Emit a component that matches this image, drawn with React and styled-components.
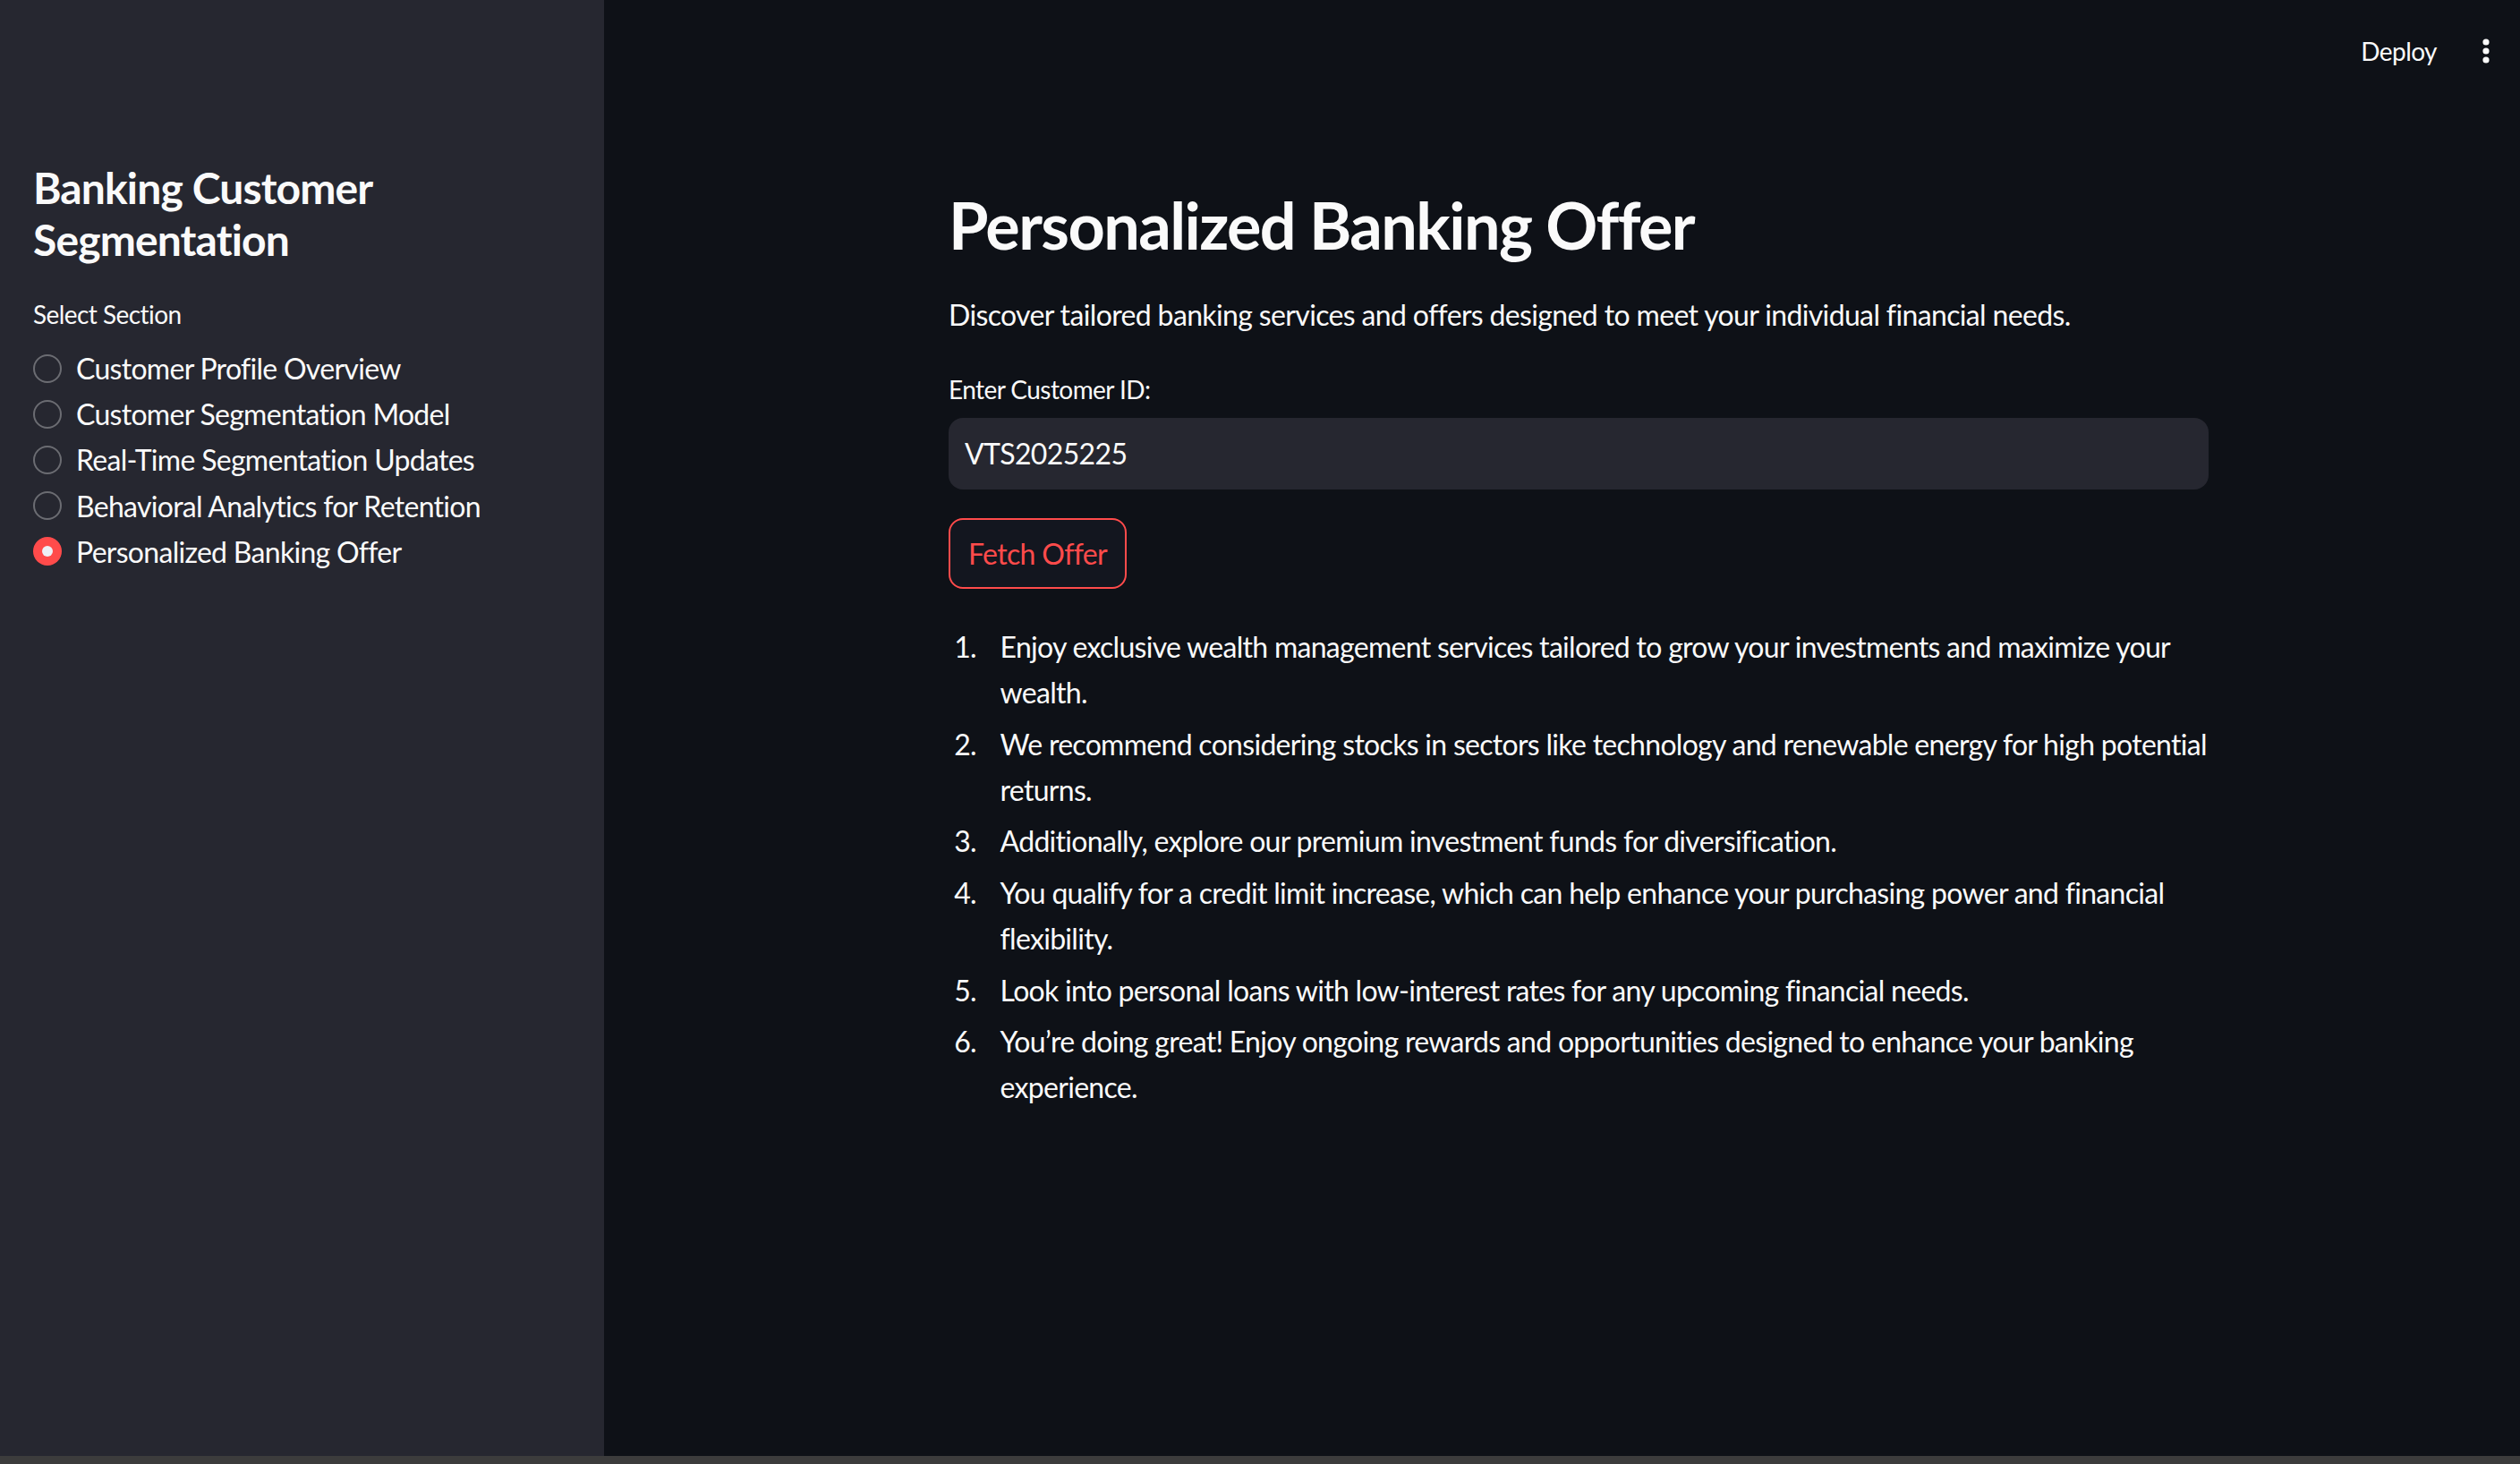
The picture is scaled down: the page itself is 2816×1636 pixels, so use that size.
import { useState } from 'react';
import styled, { createGlobalStyle } from 'styled-components';

const GlobalStyle = createGlobalStyle`
  html, body {
    margin: 0;
    padding: 0;
    background: #0e1117;
  }
  body {
    font-family: "Lato", "Noto Sans", sans-serif;
    color: #fafafa;
  }
  * {
    box-sizing: border-box;
  }
`;

const Shell = styled.div`
  height: 100vh;
  display: flex;
  flex-direction: column;
  overflow: hidden;
`;

const Body = styled.div`
  flex: 1;
  display: flex;
  min-height: 0;
`;

const BottomBar = styled.div`
  height: 9px;
  flex-shrink: 0;
  background: #3c3c3c;
`;

const Sidebar = styled.aside`
  width: 675px;
  flex-shrink: 0;
  background: #262730;
  padding: 181px 36px 0 37px;
`;

const SideTitle = styled.h1`
  margin: 0;
  font-size: 48px;
  font-weight: 700;
  line-height: 1.2;
  letter-spacing: -0.018em;
`;

const SmallLabel = styled.div`
  font-size: 28px;
  line-height: 1.6;
  letter-spacing: -0.02em;
  margin-top: ${(p) => p.$top || 0}px;
`;

const RadioGroup = styled.div`
  display: flex;
  flex-direction: column;
  margin-top: 12px;
`;

const RadioRow = styled.label`
  display: flex;
  align-items: center;
  gap: 16px;
  height: 51.2px;
  font-size: 32px;
  line-height: 1.6;
  letter-spacing: -0.022em;
  cursor: pointer;
`;

const Circle = styled.span`
  width: 32px;
  height: 32px;
  border-radius: 50%;
  flex-shrink: 0;
  display: flex;
  align-items: center;
  justify-content: center;
  border: ${(p) => (p.$checked ? 'none' : '2px solid #6b6c72')};
  background: ${(p) => (p.$checked ? '#ff4b4b' : 'transparent')};

  &::after {
    content: '';
    display: ${(p) => (p.$checked ? 'block' : 'none')};
    width: 12px;
    height: 12px;
    border-radius: 50%;
    background: #eef0f6;
  }
`;

const Main = styled.main`
  flex: 1;
  display: flex;
  flex-direction: column;
`;

const Header = styled.header`
  height: 114px;
  display: flex;
  align-items: center;
  justify-content: flex-end;
  gap: 39px;
  padding-right: 22px;
`;

const DeployButton = styled.button`
  background: none;
  border: none;
  color: #fafafa;
  font-family: inherit;
  letter-spacing: -0.02em;
  font-size: 28px;
  padding: 0;
  cursor: pointer;
`;

const MenuButton = styled.button`
  background: none;
  border: none;
  padding: 0;
  width: 32px;
  height: 32px;
  display: flex;
  cursor: pointer;
`;

const Content = styled.div`
  width: 1408px;
  margin-left: 385px;
  padding-top: 94px;
  display: flex;
  flex-direction: column;
  align-items: flex-start;
`;

const Heading = styled.h2`
  margin: 0;
  font-size: 72px;
  font-weight: 700;
  line-height: 1.2;
  letter-spacing: -0.022em;
`;

const Paragraph = styled.p`
  margin: 31.6px 0 0;
  font-size: 32px;
  line-height: 1.6;
  letter-spacing: -0.02em;
`;

const TextInput = styled.input`
  margin-top: 9px;
  width: 100%;
  height: 80px;
  background: #262730;
  border: none;
  outline: none;
  border-radius: 16px;
  padding: 0 18px;
  color: #fafafa;
  font-family: inherit;
  letter-spacing: -0.02em;
  font-size: 32px;
`;

const FetchButton = styled.button`
  margin-top: 32px;
  height: 79px;
  padding: 0 20px;
  border: 2px solid #ff4b4b;
  border-radius: 16px;
  background: #13161f;
  color: #ff4b4b;
  font-family: inherit;
  letter-spacing: -0.02em;
  font-size: 32px;
  cursor: pointer;
`;

const OfferList = styled.ol`
  margin: 39px 0 0;
  padding: 0;
  width: 100%;
`;

const OfferItem = styled.li`
  margin: 0 0 6.4px 38.4px;
  padding-left: 19.2px;
  font-size: 32px;
  line-height: 1.6;
  letter-spacing: -0.022em;
`;

const sections = [
  'Customer Profile Overview',
  'Customer Segmentation Model',
  'Real-Time Segmentation Updates',
  'Behavioral Analytics for Retention',
  'Personalized Banking Offer',
];

const offers = [
  'Enjoy exclusive wealth management services tailored to grow your investments and maximize your wealth.',
  'We recommend considering stocks in sectors like technology and renewable energy for high potential returns.',
  'Additionally, explore our premium investment funds for diversification.',
  'You qualify for a credit limit increase, which can help enhance your purchasing power and financial flexibility.',
  'Look into personal loans with low-interest rates for any upcoming financial needs.',
  'You\u2019re doing great! Enjoy ongoing rewards and opportunities designed to enhance your banking experience.',
];

function KebabIcon() {
  return (
    <svg width="32" height="32" viewBox="0 0 32 32">
      <circle cx="16" cy="6" r="3.6" fill="#fafafa" />
      <circle cx="16" cy="16" r="3.6" fill="#fafafa" />
      <circle cx="16" cy="26" r="3.6" fill="#fafafa" />
    </svg>
  );
}

function App() {
  const [section, setSection] = useState('Personalized Banking Offer');
  const [customerId, setCustomerId] = useState('VTS2025225');

  return (
    <>
      <GlobalStyle />
      <Shell>
        <Body>
          <Sidebar>
            <SideTitle>Banking Customer Segmentation</SideTitle>
            <SmallLabel $top={33}>Select Section</SmallLabel>
            <RadioGroup>
              {sections.map((s) => (
                <RadioRow key={s} onClick={() => setSection(s)}>
                  <Circle $checked={s === section} />
                  {s}
                </RadioRow>
              ))}
            </RadioGroup>
          </Sidebar>

          <Main>
            <Header>
              <DeployButton>Deploy</DeployButton>
              <MenuButton aria-label="menu">
                <KebabIcon />
              </MenuButton>
            </Header>

            <Content>
              <Heading>Personalized Banking Offer</Heading>
              <Paragraph>
                Discover tailored banking services and offers designed to meet your individual financial needs.
              </Paragraph>
              <SmallLabel $top={35.8}>Enter Customer ID:</SmallLabel>
              <TextInput value={customerId} onChange={(e) => setCustomerId(e.target.value)} />
              <FetchButton>Fetch Offer</FetchButton>
              <OfferList>
                {offers.map((o) => (
                  <OfferItem key={o}>{o}</OfferItem>
                ))}
              </OfferList>
            </Content>
          </Main>
        </Body>
        <BottomBar />
      </Shell>
    </>
  );
}

export default App;
